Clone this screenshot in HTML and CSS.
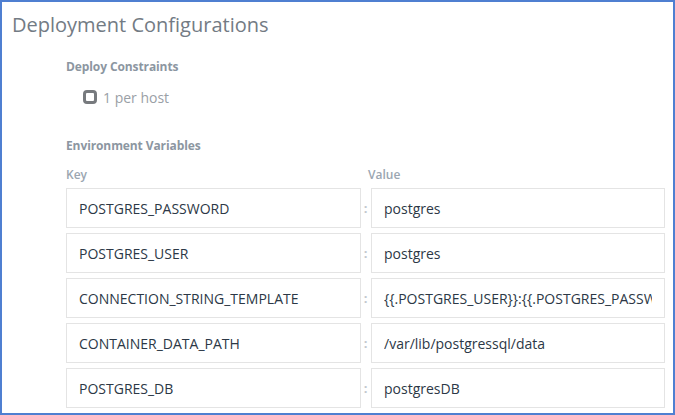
FILE: index.html
```html
<!DOCTYPE html>
<html>
<head>
<meta charset="utf-8">
<link rel="stylesheet" href="styles.css">
</head>
<body>
<div class="panel">
  <h1 class="title">Deployment Configurations</h1>
  <div class="section">
    <div class="label">Deploy Constraints</div>
    <label class="check-row">
      <span class="checkbox"></span>
      <span class="check-text">1 per host</span>
    </label>
    <div class="label env-label">Environment Variables</div>
    <div class="kv-grid">
      <div class="col-head">Key</div>
      <div></div>
      <div class="col-head">Value</div>

      <input class="field" readonly value="POSTGRES_PASSWORD">
      <div class="colon">:</div>
      <input class="field" readonly value="postgres">

      <input class="field" readonly value="POSTGRES_USER">
      <div class="colon">:</div>
      <input class="field" readonly value="postgres">

      <input class="field" readonly value="CONNECTION_STRING_TEMPLATE">
      <div class="colon">:</div>
      <input class="field" readonly value="{{.POSTGRES_USER}}:{{.POSTGRES_PASSWORD}}@{{.POSTGRES_HOST}}">

      <input class="field" readonly value="CONTAINER_DATA_PATH">
      <div class="colon">:</div>
      <input class="field" readonly value="/var/lib/postgressql/data">

      <input class="field" readonly value="POSTGRES_DB">
      <div class="colon">:</div>
      <input class="field" readonly value="postgresDB">
    </div>
  </div>
</div>
</body>
</html>
```

FILE: styles.css
```css
html, body {
  margin: 0;
  padding: 0;
  background: #ffffff;
}

body {
  font-family: "Open Sans", "Liberation Sans", sans-serif;
}

.panel {
  box-sizing: border-box;
  width: 675px;
  height: 415px;
  border: 2px solid #4f7fd1;
  padding: 9px 10px 0 10px;
  overflow: hidden;
}

.title {
  margin: 0;
  font-size: 20px;
  line-height: 27px;
  font-weight: 400;
  color: #737b84;
}

.section {
  margin-left: 54px;
}

.label {
  font-size: 12px;
  line-height: 16px;
  font-weight: 700;
  color: #8c96a1;
  margin-top: 21px;
  letter-spacing: -0.1px;
}

.check-row {
  display: flex;
  align-items: center;
  margin-top: 14px;
  margin-left: 17px;
  height: 18px;
}

.checkbox {
  box-sizing: border-box;
  width: 14px;
  height: 14px;
  border: 3px solid #777a7e;
  border-radius: 4px;
  margin-top: -3px;
}

.check-text {
  margin-left: 6px;
  font-size: 14px;
  line-height: 18px;
  color: #9aa0a6;
}

.env-label {
  margin-top: 31px;
}

.kv-grid {
  display: grid;
  grid-template-columns: 295px 10px 294px;
  column-gap: 0;
  row-gap: 5px;
  margin-top: 13px;
}

.col-head {
  font-size: 12px;
  line-height: 16px;
  font-weight: 600;
  color: #9ba6b1;
  margin-bottom: 0;
}

.col-head:nth-child(3) {
  margin-left: -3px;
}

.field {
  box-sizing: border-box;
  width: 100%;
  height: 40px;
  border: 1px solid #e4e4e4;
  border-radius: 0;
  background: #ffffff;
  padding: 0 12px;
  font-family: "Open Sans", "Liberation Sans", sans-serif;
  font-size: 14px;
  color: #2c3846;
  outline: none;
  margin: 0;
}

.colon {
  display: flex;
  align-items: center;
  justify-content: center;
  font-size: 13px;
  font-weight: 700;
  color: #c2c8ce;
  height: 40px;
  margin-left: -1px;
}
```
